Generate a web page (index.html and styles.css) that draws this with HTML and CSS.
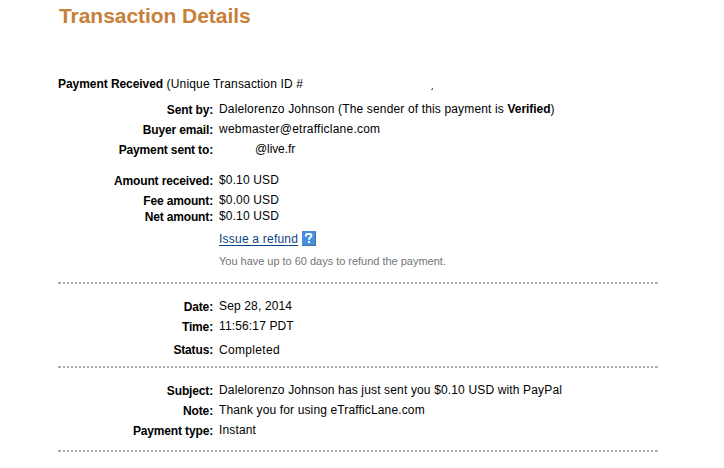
FILE: index.html
```html
<!DOCTYPE html>
<html lang="en">
<head>
<meta charset="utf-8">
<title>Transaction Details</title>
<link rel="stylesheet" href="styles.css">
</head>
<body>
<main class="page">
  <h1>Transaction Details</h1>
  <p class="summary"><span><b>Payment Received</b> (Unique Transaction ID #</span><i class="tick"></i></p>
  <dl class="section parties">
    <div class="row"><dt>Sent by:</dt><dd>Dalelorenzo Johnson (The sender of this payment is <b>Verified</b>)</dd></div>
    <div class="row"><dt>Buyer email:</dt><dd class="email">webmaster@etrafficlane.com</dd></div>
    <div class="row"><dt>Payment sent to:</dt><dd class="recipient">@live.fr</dd></div>
    <div class="row spaced"><dt>Amount received:</dt><dd>$0.10 USD</dd></div>
    <div class="row"><dt>Fee amount:</dt><dd>$0.00 USD</dd></div>
    <div class="row tight"><dt>Net amount:</dt><dd>$0.10 USD</dd></div>
    <div class="row refund"><dt></dt><dd><a href="#">Issue a refund</a><svg class="help" width="14" height="15" viewBox="0 0 14 15"><path d="M0 0h14v15H0z" fill="#3f6fa3"/><path d="M0 0h13v14H0z" fill="#4690df"/><path d="M4 5.500V4.500Q4 3 5.500 3h2Q9.500 3 9.500 4.500Q9.500 5.700 8.200 6.500Q7 7.200 7 8.800M7 10v2" fill="none" stroke="#fff" stroke-width="2"/></svg></dd></div>
    <div class="row hint"><dt></dt><dd>You have up to 60 days to refund the payment.</dd></div>
  </dl>
  <dl class="section">
    <div class="row"><dt>Date:</dt><dd>Sep 28, 2014</dd></div>
    <div class="row"><dt>Time:</dt><dd>11:56:17 PDT</dd></div>
    <div class="row status"><dt>Status:</dt><dd>Completed</dd></div>
  </dl>
  <dl class="section">
    <div class="row"><dt>Subject:</dt><dd>Dalelorenzo Johnson has just sent you $0.10 USD with PayPal</dd></div>
    <div class="row"><dt>Note:</dt><dd>Thank you for using eTrafficLane.com</dd></div>
    <div class="row"><dt>Payment type:</dt><dd>Instant</dd></div>
  </dl>
</main>
</body>
</html>
```
FILE: styles.css
```css
* { box-sizing: border-box; }
body {
  margin: 0;
  background: #fff;
  color: #000;
  font: 12px/16px "Liberation Sans", Arial, sans-serif;
}
.page { width: 600px; margin-left: 58px; padding-top: 4px; }
h1 {
  margin: 0;
  padding-left: 1px;
  color: #c88039;
  font-size: 21px;
  line-height: 24px;
  letter-spacing: -0.05px;
}
.summary {
  display: flex;
  margin: 48px 0 0;
  letter-spacing: 0.16px;
  white-space: nowrap;
}
.summary b { letter-spacing: -0.06px; }
.tick {
  width: 2px;
  height: 2px;
  margin: 12px 0 0 128px;
  background: linear-gradient(135deg, #fff 35%, #a85b25 40%);
}
.section {
  height: 84px;
  margin: 0;
  padding-top: 14px;
  background:
    linear-gradient(#a9a9a9, #a9a9a9) left bottom / 1px 2px no-repeat,
    linear-gradient(#c4c4c4, #c4c4c4) right bottom / 1px 2px no-repeat,
    repeating-linear-gradient(90deg, transparent 0 1px, #a9a9a9 1px 3px, transparent 3px 4px) left bottom / 100% 2px no-repeat;
}
.parties { height: 192px; padding-top: 9px; }
.row {
  display: grid;
  grid-template-columns: 155px 1fr;
  column-gap: 6px;
  height: 16px;
  margin-bottom: 4px;
  white-space: nowrap;
}
dt {
  padding-top: 1px;
  font-weight: bold;
  letter-spacing: -0.15px;
  text-align: right;
}
dd { margin: 0; letter-spacing: 0.14px; }
dd b { letter-spacing: -0.1px; }
.row:first-child dd { letter-spacing: 0.15px; }
.row:first-child dd b { letter-spacing: -0.05px; }
.email { letter-spacing: 0.23px; }
.recipient { padding-left: 36px; letter-spacing: -0.1px; }
.spaced { margin-top: 15px; }
.tight { margin-top: -4px; }
.refund { margin-top: 7px; }
.refund dd { display: flex; }
.refund a {
  width: 79px;
  color: #084482;
  letter-spacing: 0.22px;
  text-underline-offset: 2px;
}
.help { margin-left: 4px; }
.hint { margin-top: 6px; color: #757575; font-size: 11px; }
.hint dd { letter-spacing: -0.02px; }
.status { margin-top: 8px; }
.status dt { padding-top: 0; }
.status dd { letter-spacing: 0.33px; }
```
